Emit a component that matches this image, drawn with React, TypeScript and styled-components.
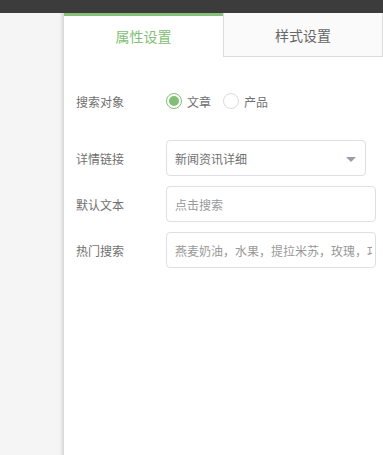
import React from "react";
import styled, { createGlobalStyle } from "styled-components";

const Global = createGlobalStyle`
  html, body { margin: 0; padding: 0; background: #fff; }
  body { font-family: "Noto Sans CJK SC", "Noto Sans", sans-serif; }
  * { box-sizing: border-box; }
`;

const Page = styled.div`
  width: 383px;
  height: 455px;
  display: flex;
  flex-direction: column;
  overflow: hidden;
`;

const TopBar = styled.div`
  height: 13px;
  background: #3c3c3c;
  flex: none;
`;

const Body = styled.div`
  flex: 1;
  display: flex;
`;

const Side = styled.div`
  width: 64px;
  flex: none;
  background: linear-gradient(to right, #f5f5f5 0, #f5f5f5 59px, #ececec 61px, #dcdcdc 63px, #d8d8d8 64px);
`;

const Panel = styled.div`
  flex: 1;
  background: #fff;
  display: flex;
  flex-direction: column;
`;

const Tabs = styled.div`
  display: flex;
  height: 44px;
`;

const Tab = styled.div<{ $active?: boolean }>`
  width: ${(p) => (p.$active ? "159px" : "160px")};
  display: flex;
  align-items: center;
  justify-content: center;
  font-size: 14px;
  color: ${(p) => (p.$active ? "#82be74" : "#666")};
  background: ${(p) => (p.$active ? "#fff" : "#fafafa")};
  border-top: ${(p) => (p.$active ? "3px solid #88bf7a" : "none")};
  border-left: ${(p) => (p.$active ? "none" : "1px solid #dcdcdc")};
  border-right: ${(p) => (p.$active ? "none" : "1px solid #dcdcdc")};
  border-bottom: ${(p) => (p.$active ? "none" : "1px solid #dcdcdc")};
  padding-bottom: ${(p) => (p.$active ? "1px" : "0")};
`;

const Form = styled.div`
  padding: 30px 0 0 12px;
  display: flex;
  flex-direction: column;
`;

const Row = styled.div<{ $mt?: number }>`
  display: flex;
  align-items: center;
  margin-top: ${(p) => p.$mt ?? 0}px;
  min-height: 28px;
`;

const Label = styled.div`
  width: 90px;
  font-size: 12px;
  color: #707070;
  flex: none;
`;

const RadioGroup = styled.div`
  display: flex;
  align-items: center;
`;

const RadioItem = styled.label`
  display: flex;
  align-items: center;
  margin-right: 12px;
  font-size: 12px;
  color: #707070;
`;

const RadioCircle = styled.span<{ $checked?: boolean }>`
  width: 16px;
  height: 16px;
  border-radius: 50%;
  border: 1px solid ${(p) => (p.$checked ? "#82be74" : "#dcdcdc")};
  background: #fff;
  display: flex;
  align-items: center;
  justify-content: center;
  margin-right: 5px;
  &::after {
    content: "";
    width: 10px;
    height: 10px;
    border-radius: 50%;
    background: ${(p) => (p.$checked ? "#82be74" : "transparent")};
  }
`;

const Select = styled.div`
  width: 200px;
  height: 36px;
  border: 1px solid #dcdfe6;
  border-radius: 4px;
  display: flex;
  align-items: center;
  padding: 0 8px;
  font-size: 12px;
  color: #707070;
  position: relative;
`;

const Input = styled.input`
  width: 210px;
  height: 36px;
  border: 1px solid #dcdfe6;
  border-radius: 4px;
  padding: 0 3px 0 8px;
  font-family: "Noto Sans CJK SC", "Noto Sans", sans-serif;
  font-size: 12px;
  color: #707070;
  background: #fff;
  outline: none;
  &::placeholder {
    color: #999;
    opacity: 1;
  }
`;

const Caret = styled.span`
  position: absolute;
  right: 9px;
  top: 16px;
  width: 0;
  height: 0;
  border-left: 5px solid transparent;
  border-right: 5px solid transparent;
  border-top: 5px solid #9a9ea6;
`;

export default function App() {
  return (
    <Page>
      <Global />
      <TopBar />
      <Body>
        <Side />
        <Panel>
          <Tabs>
            <Tab $active>属性设置</Tab>
            <Tab>样式设置</Tab>
          </Tabs>
          <Form>
            <Row>
              <Label>搜索对象</Label>
              <RadioGroup>
                <RadioItem>
                  <RadioCircle $checked />
                  文章
                </RadioItem>
                <RadioItem>
                  <RadioCircle />
                  产品
                </RadioItem>
              </RadioGroup>
            </Row>
            <Row $mt={25}>
              <Label>详情链接</Label>
              <Select>
                新闻资讯详细
                <Caret />
              </Select>
            </Row>
            <Row $mt={10}>
              <Label>默认文本</Label>
              <Input readOnly placeholder="点击搜索" />
            </Row>
            <Row $mt={10}>
              <Label>热门搜索</Label>
              <Input readOnly placeholder="燕麦奶油，水果，提拉米苏，玫瑰，巧克力" />
            </Row>
          </Form>
        </Panel>
      </Body>
    </Page>
  );
}
